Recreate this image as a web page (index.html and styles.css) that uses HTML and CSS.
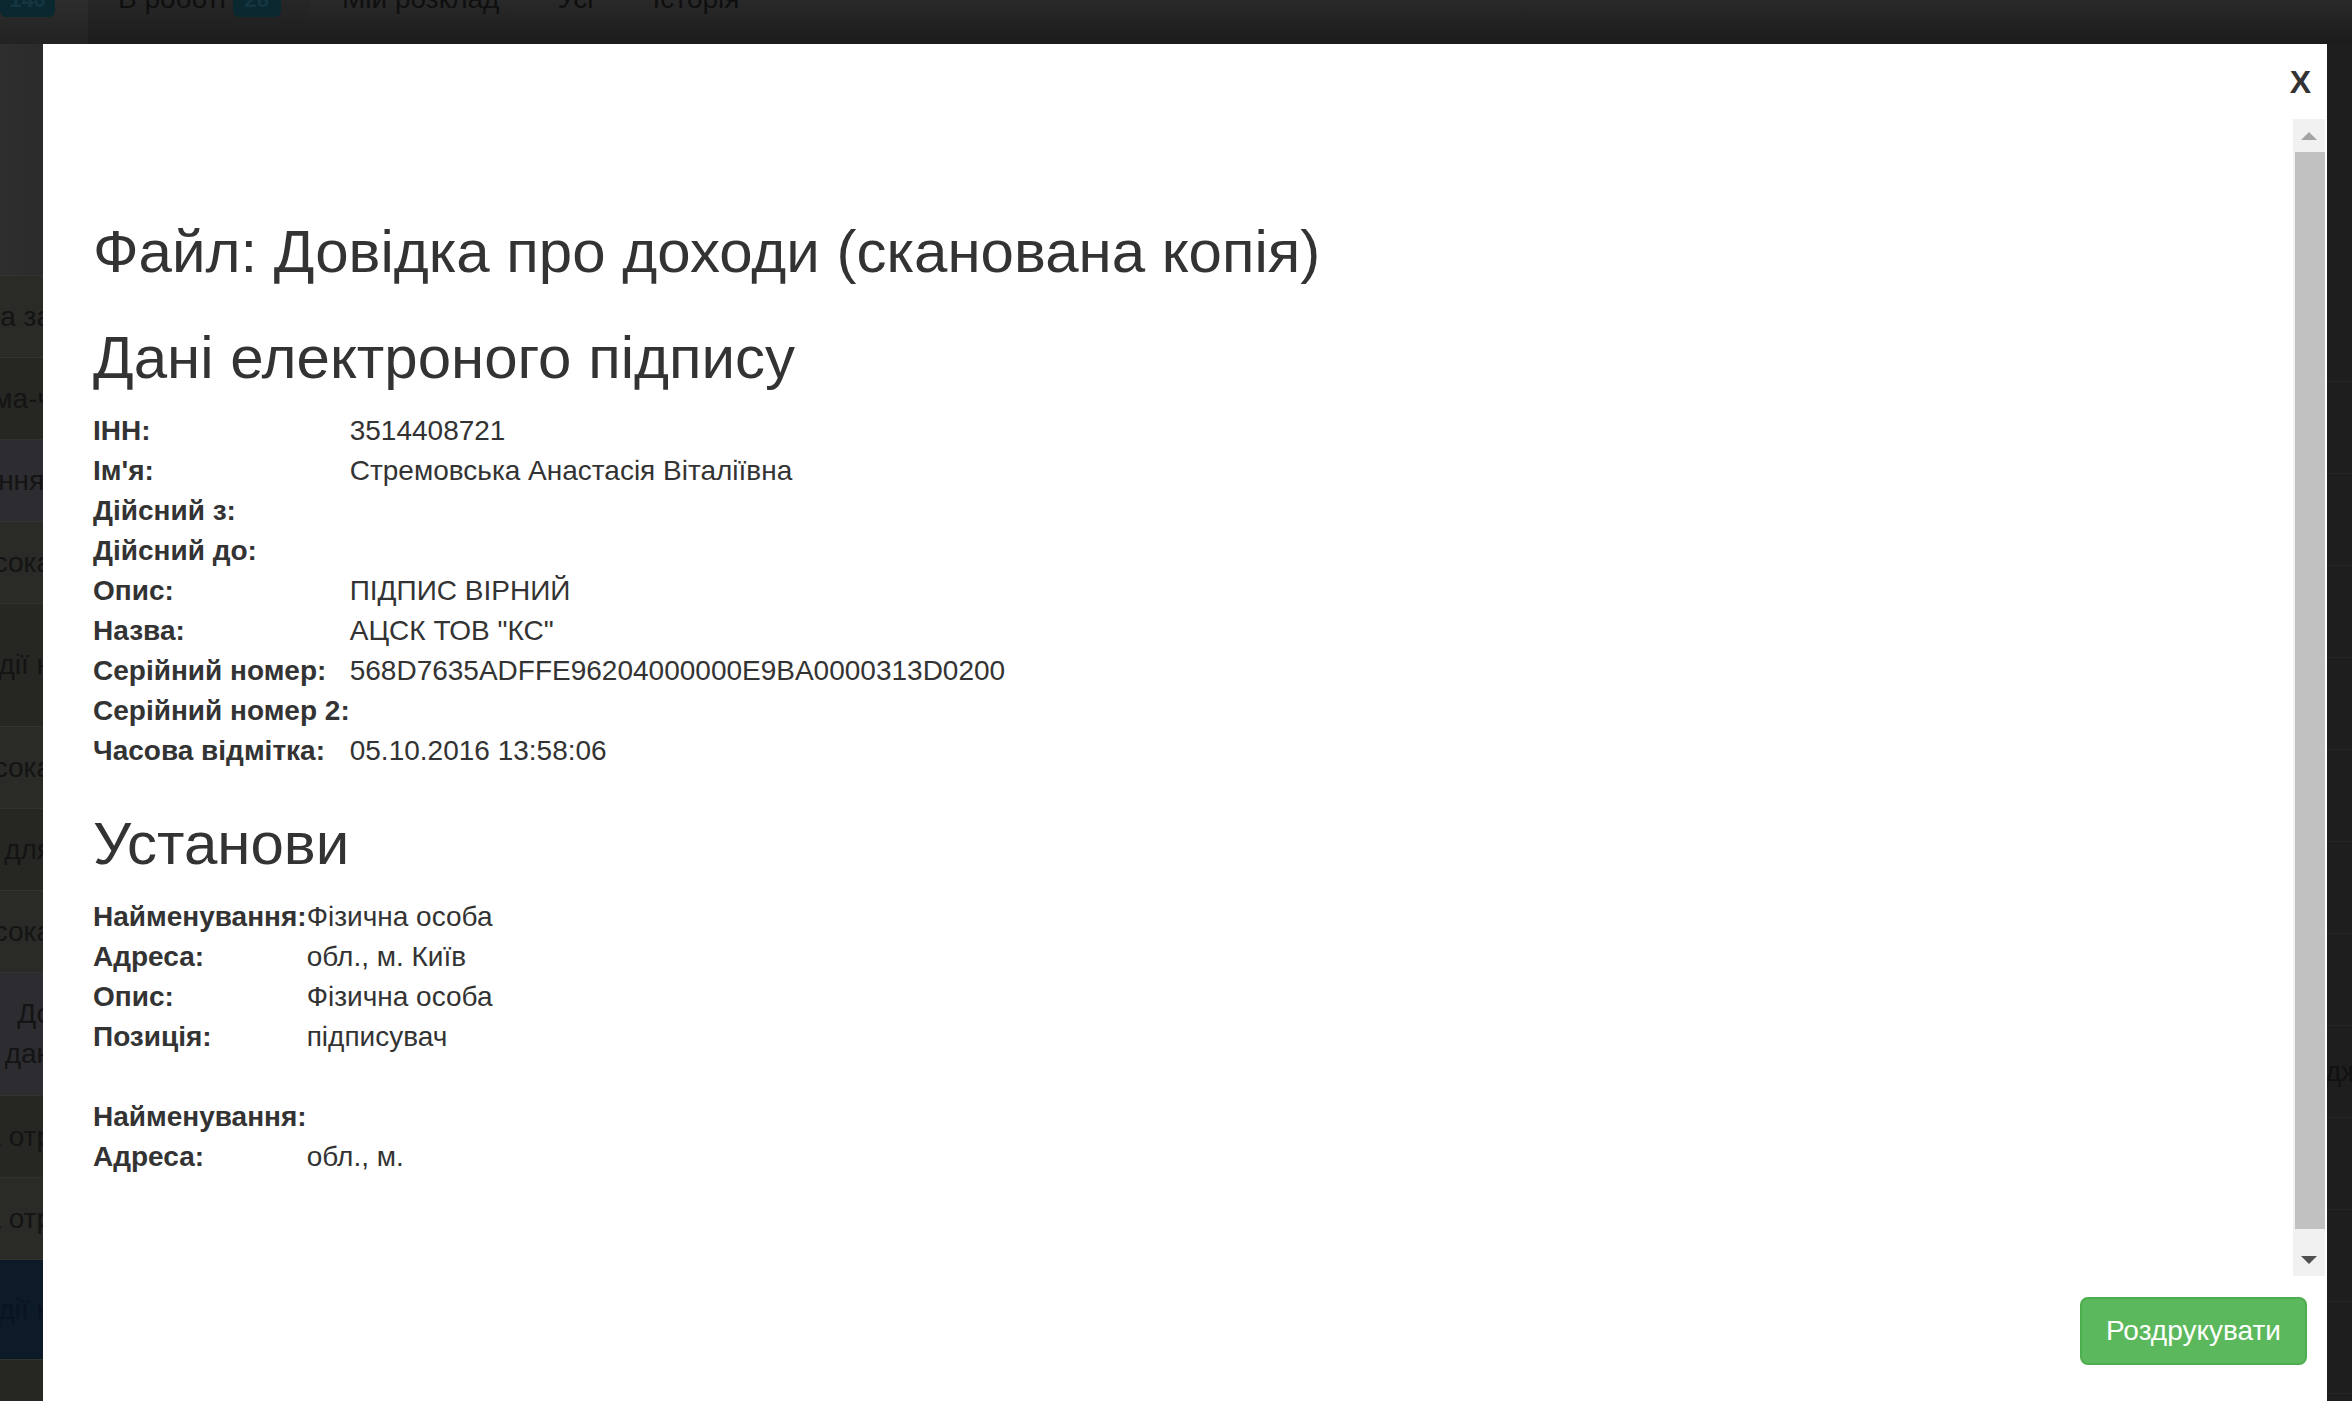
FILE: index.html
```html
<!DOCTYPE html>
<html lang="uk">
<head>
<meta charset="utf-8">
<title>Файл: Довідка про доходи</title>
<link rel="stylesheet" href="styles.css">
</head>
<body>
<div class="app">
  <header class="topnav">
    <div class="nav-cell nav-first"><span class="badge badge-wide">140</span></div>
    <div class="nav-cell nav-work"><span class="nav-text">В роботі</span><span class="badge">28</span></div>
    <div class="nav-cell nav-plan"><span class="nav-text">Мій розклад</span></div>
    <div class="nav-cell nav-all"><span class="nav-text">Усі</span></div>
    <div class="nav-cell nav-hist"><span class="nav-text">Історія</span></div>
  </header>
  <div class="app-main">
    <aside class="sidebar">
      <div class="side-top"></div>
      <div class="srow r-warm"><span>Заява за</span></div>
      <div class="srow r-dark"><span>Форма-ч</span></div>
      <div class="srow r-blue"><span>Закінчення </span></div>
      <div class="srow r-warm"><span>Висока</span></div>
      <div class="srow r-dark r-tall"><span>Видача дії н</span></div>
      <div class="srow r-warm"><span>Висока</span></div>
      <div class="srow r-dark"><span>Заява для</span></div>
      <div class="srow r-warm"><span>Висока</span></div>
      <div class="srow r-blue r-tall r-two"><span>Дозвіл  До</span><span>надання дан</span></div>
      <div class="srow r-dark"><span>Заява отр</span></div>
      <div class="srow r-warm"><span>Заява отр</span></div>
      <div class="srow r-navy"><span>Видача дії н</span></div>
      <div class="srow r-dark"><span></span></div>
    </aside>
    <div class="rightcol">
      <div class="rrow"></div>
      <div class="rrow"></div>
      <div class="rrow"></div>
      <div class="rrow"></div>
      <div class="rrow"></div>
      <div class="rrow"></div>
      <div class="rrow"></div>
      <div class="rrow"></div>
      <div class="rrow rrow-text"><span>дж</span></div>
      <div class="rrow"></div>
      <div class="rrow"></div>
      <div class="rrow"></div>
    </div>
  </div>
</div>

<div class="modal">
  <div class="modal-head">
    <span class="close">X</span>
  </div>
  <div class="modal-body">
    <div class="content">
      <h2 class="heading">Файл: Довідка про доходи (сканована копія)</h2>
      <h2 class="heading">Дані електроного підпису</h2>
      <div class="kv">
        <div class="k">ІНН:</div><div class="v">3514408721</div>
        <div class="k">Ім'я:</div><div class="v">Стремовська Анастасія Віталіївна</div>
        <div class="k">Дійсний з:</div><div class="v"></div>
        <div class="k">Дійсний до:</div><div class="v"></div>
        <div class="k">Опис:</div><div class="v">ПІДПИС ВІРНИЙ</div>
        <div class="k">Назва:</div><div class="v">АЦСК ТОВ "КС"</div>
        <div class="k">Серійний номер:</div><div class="v">568D7635ADFFE96204000000E9BA0000313D0200</div>
        <div class="k">Серійний номер 2:</div><div class="v"></div>
        <div class="k">Часова відмітка:</div><div class="v">05.10.2016 13:58:06</div>
      </div>
      <h2 class="heading">Установи</h2>
      <div class="kv">
        <div class="k">Найменування:</div><div class="v">Фізична особа</div>
        <div class="k">Адреса:</div><div class="v">обл., м. Київ</div>
        <div class="k">Опис:</div><div class="v">Фізична особа</div>
        <div class="k">Позиція:</div><div class="v">підписувач</div>
        <div class="k spacer"></div><div class="v spacer"></div>
        <div class="k">Найменування:</div><div class="v"></div>
        <div class="k">Адреса:</div><div class="v">обл., м.</div>
      </div>
    </div>
    <div class="scrollbar">
      <div class="sb-btn"><span class="arrow-up"></span></div>
      <div class="sb-thumb"></div>
      <div class="sb-gap"></div>
      <div class="sb-btn"><span class="arrow-down"></span></div>
    </div>
  </div>
  <div class="modal-foot">
    <button class="btn-print" type="button">Роздрукувати</button>
  </div>
</div>
</body>
</html>
```

FILE: styles.css
```css
* { box-sizing: border-box; }

html, body {
  margin: 0;
  padding: 0;
  width: 2352px;
  height: 1401px;
  overflow: hidden;
}

body {
  font-family: "Liberation Sans", Arial, sans-serif;
  background: #1f1f1f;
  color: #333;
  position: relative;
}

/* ---------- dimmed application behind the modal ---------- */
.app {
  width: 2352px;
  height: 1401px;
  display: flex;
  flex-direction: column;
}

.topnav {
  height: 44px;
  flex-shrink: 0;
  display: flex;
  align-items: flex-start;
  background: linear-gradient(#292929, #1c1c1c);
  overflow: hidden;
}

.nav-cell {
  display: flex;
  align-items: flex-start;
  height: 44px;
  flex-shrink: 0;
}

.nav-first {
  width: 88px;
  background: linear-gradient(#2d2d2d, #222);
}

.nav-work {
  padding-left: 30px;
  width: 222px;
  background: linear-gradient(#272727, #1c1c1c);
}

.nav-plan { padding-left: 32px; }
.nav-all { padding-left: 58px; }
.nav-hist { padding-left: 59px; }

.nav-text {
  font-size: 28px;
  line-height: 40px;
  margin-top: -21px;
  color: #0f0f0f;
}

.nav-work .nav-text { margin-right: 7px; }

.badge {
  display: inline-block;
  background: #0b2830;
  color: #143640;
  font-size: 22px;
  font-weight: bold;
  line-height: 34px;
  margin-top: -17px;
  width: 48px;
  text-align: center;
  border-radius: 0 0 6px 6px;
}

.badge-wide { width: 55px; }

.app-main {
  flex: 1;
  display: flex;
  justify-content: space-between;
  overflow: hidden;
}

.sidebar {
  width: 54px;
  display: flex;
  flex-direction: column;
  overflow: hidden;
}

.side-top {
  height: 232px;
  flex-shrink: 0;
  background: linear-gradient(90deg, #2e2e2e, #2a2a2a);
  border-bottom: 1px solid #333;
}

.srow {
  height: 82px;
  flex-shrink: 0;
  display: flex;
  flex-direction: column;
  justify-content: center;
  align-items: flex-end;
  overflow: hidden;
  white-space: pre;
  font-size: 28px;
  line-height: 38px;
  color: #141414;
  border-bottom: 1px solid #32322f;
  padding-right: 2px;
}

.srow span { display: block; }

.r-tall { height: 123px; }
.r-two { line-height: 40px; }
.r-warm { background: #2a2a27; }
.r-dark { background: #262623; }
.r-blue { background: #2c2c31; }
.r-navy { background: #0d1a28; color: #0a1420; height: 100px; }

.rightcol {
  width: 25px;
  display: flex;
  flex-direction: column;
  background: #1e1e1e;
  padding-top: 246px;
  overflow: hidden;
}

.rrow {
  height: 92px;
  flex-shrink: 0;
  border-bottom: 1px solid #262626;
  overflow: hidden;
  display: flex;
  align-items: center;
  font-size: 28px;
  color: #111;
  white-space: nowrap;
}

.rrow-text span { margin-left: -2px; }

/* ---------- modal ---------- */
.modal {
  position: absolute;
  left: 43px;
  top: 44px;
  width: 2284px;
  height: 1357px;
  background: #fff;
  display: flex;
  flex-direction: column;
}

.modal-head {
  height: 75px;
  flex-shrink: 0;
  display: flex;
  justify-content: flex-end;
  align-items: center;
  padding-right: 16px;
}

.close {
  font-size: 32px;
  font-weight: bold;
  line-height: 1;
  color: #333;
}

.modal-body {
  height: 1157px;
  flex-shrink: 0;
  display: flex;
}

.content {
  flex: 1;
  padding: 60px 0 0 50px;
  overflow: hidden;
}

.heading {
  font-size: 60px;
  font-weight: normal;
  line-height: 66px;
  margin: 40px 0 20px;
  color: #333;
}

.kv {
  display: grid;
  grid-template-columns: max-content 1fr;
  font-size: 28px;
  line-height: 40px;
}

.k {
  font-weight: bold;
  color: #333;
  min-height: 40px;
}

.v {
  color: #333;
  min-height: 40px;
}

/* scrollbar */
.scrollbar {
  width: 32px;
  margin-right: 2px;
  background: #f1f1f1;
  display: flex;
  flex-direction: column;
}

.sb-btn {
  height: 33px;
  display: flex;
  align-items: center;
  justify-content: center;
}

.arrow-up {
  width: 0;
  height: 0;
  border-left: 8px solid transparent;
  border-right: 8px solid transparent;
  border-bottom: 8px solid #a3a3a3;
}

.arrow-down {
  width: 0;
  height: 0;
  border-left: 8px solid transparent;
  border-right: 8px solid transparent;
  border-top: 8px solid #505050;
}

.sb-thumb {
  height: 1077px;
  margin-left: 2px;
  background: #c1c1c1;
}

.sb-gap { height: 14px; }

/* footer */
.modal-foot {
  display: flex;
  justify-content: flex-end;
  padding: 21px 20px 0 0;
}

.btn-print {
  font-family: "Liberation Sans", Arial, sans-serif;
  font-size: 28px;
  line-height: 40px;
  color: #fff;
  background: #5cb85c;
  border: 2px solid #4cae4c;
  border-radius: 8px;
  padding: 12px 24px;
  cursor: pointer;
}
```
